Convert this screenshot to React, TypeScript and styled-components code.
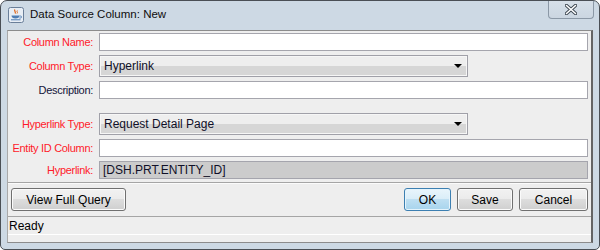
import React from 'react';
import styled, { createGlobalStyle } from 'styled-components';

const GlobalStyle = createGlobalStyle`
    html, body {
        margin: 0;
        padding: 0;
        background: #ffffff;
    }
    body {
        font-family: "Liberation Sans", Arial, sans-serif;
    }
`

const Window = styled.div`
    box-sizing: border-box;
    width: 600px;
    height: 250px;
    display: flex;
    flex-direction: column;
    background: #cdd9e4;
    border: 1px solid #4a4f55;
    border-radius: 7px 7px 5px 5px;
    overflow: hidden;
`

const TitleBar = styled.div`
    height: 29px;
    display: flex;
    align-items: flex-start;
    position: relative;
`

const TitleIcon = styled.svg`
    margin: 6px 0 0 7px;
    width: 16px;
    height: 16px;
`

const TitleText = styled.span`
    margin: 7px 0 0 6px;
    font-size: 11.5px;
    color: #0d0d0d;
`

const CloseButton = styled.div`
    position: absolute;
    top: -1px;
    right: 5px;
    width: 46px;
    height: 19px;
    box-sizing: border-box;
    border: 1px solid #8b98a6;
    border-top: none;
    border-radius: 0 0 4px 4px;
    background: linear-gradient(#d7e0e9, #cbd6e1);
    display: flex;
    align-items: center;
    justify-content: center;
`

const Body = styled.div`
    flex: 1;
    margin: 0 6px 6px 6px;
    border-top: 1px solid #8c8c8c;
    border-left: 1px solid #a9a9a9;
    border-right: 2px solid #646464;
    border-bottom: 1px solid #8c8c8c;
    background: #eeeeee;
    display: flex;
    flex-direction: column;
`

const Form = styled.div`
    display: grid;
    grid-template-columns: 85px 1fr;
    column-gap: 6px;
    row-gap: 4px;
    padding: 2px 3px 0 0;
    align-items: center;
`

const Label = styled.label<{ $required?: boolean }>`
    justify-self: end;
    font-size: 11px;
    letter-spacing: -0.3px;
    color: ${p => (p.$required ? '#ff1a2a' : '#14143a')};
`

const TextInput = styled.div<{ $readonly?: boolean }>`
    box-sizing: border-box;
    height: 18px;
    border: 1px solid #a5a5ad;
    background: ${p => (p.$readonly ? '#cccccc' : '#ffffff')};
    font-size: 12px;
    color: #101028;
    padding: 0 3px;
    line-height: 16px;
`

const Select = styled.div`
    box-sizing: border-box;
    width: 369px;
    height: 22px;
    border: 1px solid #a0a0a8;
    box-shadow: inset 0 0 0 1px #f6f6f6;
    background: linear-gradient(#eeeeee 0, #eeeeee 50%, #d6d6d6 50%, #d6d6d6 100%);
    display: flex;
    align-items: center;
    justify-content: space-between;
    padding: 0 5px 0 4px;
    font-size: 12px;
    color: #101028;
`

const Arrow = styled.span`
    width: 0;
    height: 0;
    border-left: 4px solid transparent;
    border-right: 4px solid transparent;
    border-top: 4px solid #000000;
`

const Spacer = styled.div`
    grid-column: 1 / span 2;
    height: 6px;
`

const Separator = styled.div`
    margin-top: 3px;
    height: 1px;
    background: #a5a5a5;
    border-bottom: 1px solid #fbfbfb;
`

const ButtonBar = styled.div`
    display: flex;
    align-items: center;
    gap: 6px;
    padding: 4px 3px 5px 3px;
`

const Filler = styled.div`
    flex: 1;
`

const Button = styled.button<{ $primary?: boolean; $w: number }>`
    box-sizing: border-box;
    width: ${p => p.$w}px;
    height: 23px;
    border-radius: 3px;
    border: 1px solid ${p => (p.$primary ? '#3c7fb1' : '#707070')};
    box-shadow: inset 0 0 0 1px ${p => (p.$primary ? '#e5f4fc' : '#fbfbfb')};
    background: ${p =>
        p.$primary
            ? 'linear-gradient(#e9f5fc 0, #d9edf8 50%, #bedff2 50%, #a7d4ed 100%)'
            : 'linear-gradient(#f2f2f2 0, #ebebeb 50%, #dddddd 50%, #cfcfcf 100%)'};
    font-family: "Liberation Sans", Arial, sans-serif;
    font-size: 12px;
    color: #000000;
    padding: 0;
`

const StatusBar = styled.div`
    height: 19px;
    box-sizing: border-box;
    border-top: 1px solid #a5a5a5;
    border-bottom: 1px solid #ffffff;
    padding: 1px 1px;
    font-size: 12px;
    color: #000000;
    line-height: 16px;
`

function JavaIcon() {
    return (
        <TitleIcon viewBox="0 0 16 16">
            <rect x="0.5" y="0.5" width="15" height="15" rx="2" fill="#e8eef5" stroke="#6a7f99" />
            <path d="M7 2.5c-1.5 1.5 1.5 2.2 0 4" stroke="#e0661a" strokeWidth="1.2" fill="none" />
            <path d="M9.3 3.5c-1.2 1 1 1.6 -0.3 3" stroke="#e0661a" strokeWidth="1" fill="none" />
            <path d="M3.5 8.5h8c0 2 -1.5 3 -4 3s-4 -1 -4 -3z" fill="#4f7db3" />
            <path d="M11.5 9h1a1 1 0 0 1 0 2h-1.2" stroke="#4f7db3" strokeWidth="0.9" fill="none" />
            <path d="M3 12.8h9.5" stroke="#4f7db3" strokeWidth="1" />
        </TitleIcon>
    );
}

function App() {
    return (
        <>
            <GlobalStyle />
            <Window>
                <TitleBar>
                    <JavaIcon />
                    <TitleText>Data Source Column: New</TitleText>
                    <CloseButton>
                        <svg width="12" height="11" viewBox="0 0 12 11">
                            <path d="M1.5 1.5l9 8M10.5 1.5l-9 8" stroke="#3c4650" strokeWidth="3.4" strokeLinecap="round" />
                            <path d="M1.5 1.5l9 8M10.5 1.5l-9 8" stroke="#ffffff" strokeWidth="1.6" strokeLinecap="round" />
                        </svg>
                    </CloseButton>
                </TitleBar>
                <Body>
                    <Form>
                        <Label $required>Column Name:</Label>
                        <TextInput />
                        <Label $required>Column Type:</Label>
                        <Select>
                            Hyperlink
                            <Arrow />
                        </Select>
                        <Label>Description:</Label>
                        <TextInput />
                        <Spacer />
                        <Label $required>Hyperlink Type:</Label>
                        <Select>
                            Request Detail Page
                            <Arrow />
                        </Select>
                        <Label $required>Entity ID Column:</Label>
                        <TextInput />
                        <Label $required>Hyperlink:</Label>
                        <TextInput $readonly>[DSH.PRT.ENTITY_ID]</TextInput>
                    </Form>
                    <Separator />
                    <ButtonBar>
                        <Button $w={115}>View Full Query</Button>
                        <Filler />
                        <Button $primary $w={47}>OK</Button>
                        <Button $w={56}>Save</Button>
                        <Button $w={69}>Cancel</Button>
                    </ButtonBar>
                    <StatusBar>Ready</StatusBar>
                    <Filler />
                </Body>
            </Window>
        </>
    );
}

export default App;
